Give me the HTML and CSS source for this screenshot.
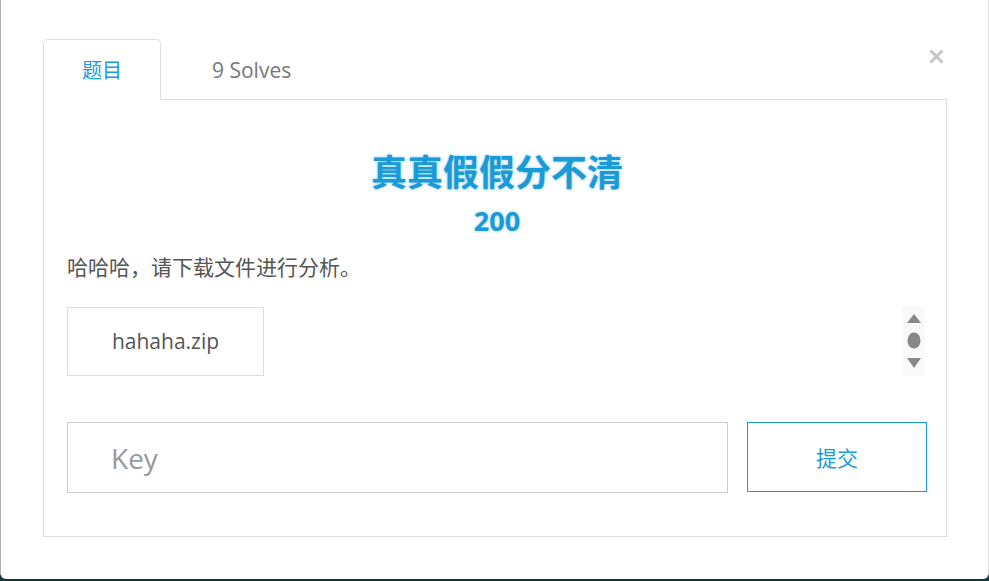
FILE: index.html
```html
<!DOCTYPE html>
<html lang="zh-CN">
<head>
<meta charset="utf-8">
<title>真真假假分不清</title>
<link rel="stylesheet" href="styles.css">
</head>
<body>
<div class="modal">
  <button class="close" aria-label="关闭">
    <svg width="15" height="15" viewBox="0 0 15 15"><path d="M1.5 1.5 L13.5 13.5 M13.5 1.5 L1.5 13.5" stroke="#c6c6c6" stroke-width="3" stroke-linecap="butt"/></svg>
  </button>
  <div class="tabs">
    <div class="tab active">题目</div>
    <div class="tab solves">9 Solves</div>
  </div>
  <div class="panel">
    <h1 class="title">真真假假分不清</h1>
    <div class="points">200</div>
    <p class="desc">哈哈哈，请下载文件进行分析。</p>
    <div class="file-row">
      <div class="file">hahaha.zip</div>
      <div class="spinner">
        <svg width="23" height="70" viewBox="0 0 23 70">
          <path d="M5 17 L12 8 L19 17 Z" fill="#888"/>
          <ellipse cx="12" cy="34.5" rx="6.5" ry="8" fill="#888"/>
          <path d="M5 52 L19 52 L12 62 Z" fill="#888"/>
        </svg>
      </div>
    </div>
    <div class="submit-row">
      <input class="key" type="text" placeholder="Key">
      <button class="submit">提交</button>
    </div>
  </div>
</div>
</body>
</html>
```

FILE: styles.css
```css
html, body {
  margin: 0;
  padding: 0;
}
body {
  background: #12343b;
  height: 581px;
  overflow: hidden;
  font-family: "Open Sans", "Noto Sans CJK SC", sans-serif;
}
.modal {
  position: relative;
  box-sizing: border-box;
  height: 579px;
  background: #fff;
  border-left: 1px solid #b4b4b4;
  border-right: 1px solid #e0e0e0;
  border-radius: 0 0 6px 6px;
  padding: 39px 41px 0 42px;
}
.close {
  position: absolute;
  top: 49px;
  left: 928px;
  width: 15px;
  height: 15px;
  padding: 0;
  border: 0;
  background: none;
  display: block;
}
.close svg { display: block; }
.tabs {
  display: flex;
  border-bottom: 1px solid #ddd;
  height: 60px;
}
.tab {
  box-sizing: border-box;
  height: 61px;
  margin-bottom: -1px;
  padding-top: 2px;
  line-height: 58px;
  font-size: 20px;
  color: #777;
}
.tab.active {
  width: 118px;
  text-align: center;
  color: #1a9ad6;
  border: 1px solid #ddd;
  border-bottom-color: #fff;
  border-radius: 5px 5px 0 0;
  background: #fff;
}
.tab.solves {
  padding-left: 51px;
  font-size: 21px;
  color: #777;
}
.panel {
  box-sizing: border-box;
  height: 437px;
  border: 1px solid #ddd;
  border-top: none;
  padding: 51px 19px 0 23px;
}
.title {
  margin: 0;
  text-align: center;
  font-size: 36px;
  line-height: 44px;
  font-weight: 700;
  color: #1a9ad6;
  text-shadow: 0 0 3px rgba(26, 154, 214, 0.55);
}
.points {
  margin-top: 10px;
  text-align: center;
  font-size: 27px;
  line-height: 32px;
  font-weight: 700;
  color: #1a9ad6;
  text-shadow: 0 0 3px rgba(26, 154, 214, 0.5);
}
.desc {
  margin: 16px 0 0;
  font-size: 21px;
  line-height: 28px;
  color: #555;
}
.file-row {
  margin-top: 25px;
  display: flex;
  justify-content: space-between;
  align-items: center;
}
.file {
  box-sizing: border-box;
  width: 197px;
  height: 69px;
  border: 1px solid #ddd;
  display: flex;
  align-items: center;
  justify-content: center;
  font-size: 21px;
  color: #555;
}
.spinner {
  width: 23px;
  height: 70px;
  margin-right: 2px;
  background: #f9f9f9;
}
.spinner svg { display: block; }
.submit-row {
  margin-top: 46px;
  display: flex;
  gap: 19px;
}
.key {
  box-sizing: border-box;
  width: 661px;
  height: 71px;
  border: 1px solid #ccc;
  padding: 0 0 0 43px;
  margin: 0;
  font-family: "Open Sans", "Noto Sans CJK SC", sans-serif;
  font-size: 28px;
  color: #555;
  outline: none;
}
.key::placeholder {
  color: #999;
}
.submit {
  box-sizing: border-box;
  width: 180px;
  height: 70px;
  border: 1px solid #1a9ad6;
  background: #fff;
  margin: 0;
  padding: 0;
  font-family: "Open Sans", "Noto Sans CJK SC", sans-serif;
  font-size: 21px;
  color: #1a9ad6;
}
```
